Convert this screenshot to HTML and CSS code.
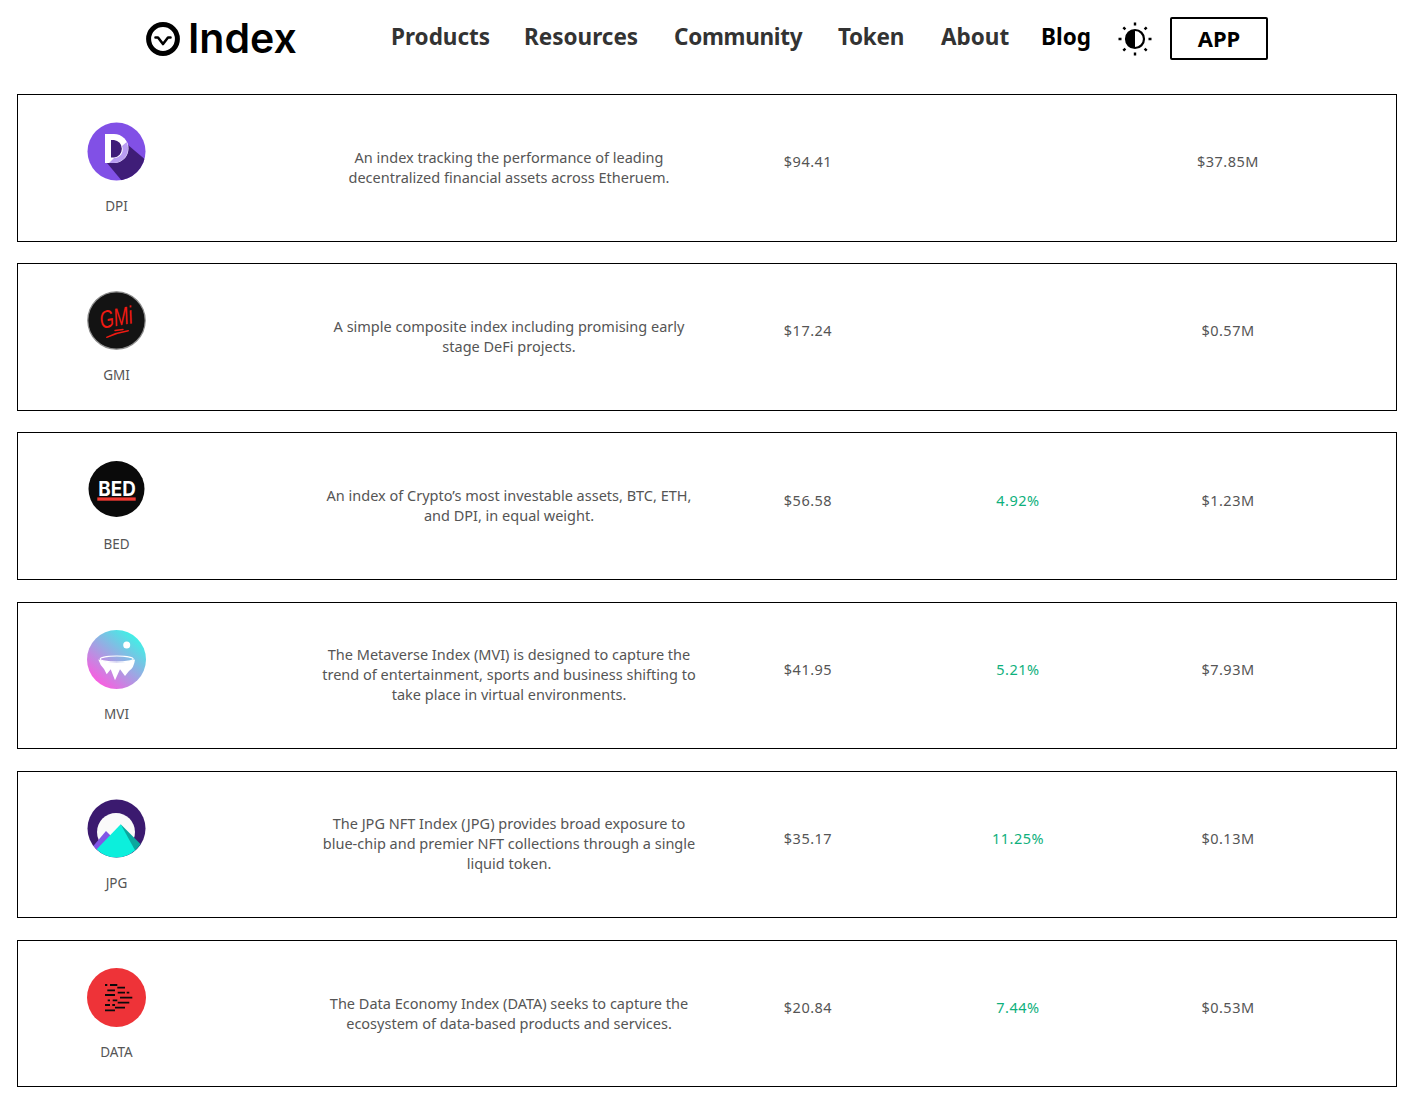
FILE: index.html
```html
<!DOCTYPE html>
<html lang="en">
<head>
    <meta charset="UTF-8" />
    <title>Index Coop - Products</title>
    <link rel="stylesheet" href="styles.css">
</head>
<body>
    <header class="topbar">
        <a class="brand" href="#">
            <svg class="brand-mark" viewBox="0 0 34 34" width="34" height="34">
                <circle cx="17" cy="17" r="14.4" fill="none" stroke="#000" stroke-width="5"/>
                <path d="M9.5 15.5 L12 15.5 L17 22 L22 15.5 L24.5 15.5" fill="none" stroke="#000" stroke-width="2.6" stroke-linejoin="round" stroke-linecap="round"/>
            </svg>
            <span class="brand-name">Index</span>
        </a>
        <nav class="nav">
            <a class="nav-link nav-products" href="#">Products</a>
            <a class="nav-link nav-resources" href="#">Resources</a>
            <a class="nav-link nav-community" href="#">Community</a>
            <a class="nav-link nav-token" href="#">Token</a>
            <a class="nav-link nav-about" href="#">About</a>
            <a class="nav-link nav-blog" href="#">Blog</a>
        </nav>
        <button class="theme-toggle" type="button" aria-label="Toggle theme">
            <svg viewBox="0 0 36 36" width="36" height="36">
                <circle cx="18" cy="18" r="9" fill="none" stroke="#000" stroke-width="2.2"/>
                <path d="M18 9 a9 9 0 0 0 0 18 z" fill="#000"/>
                <path d="M18 1.5v3M18 31.5v3M1.5 18h3M31.5 18h3M6.3 6.3l2.1 2.1M27.6 27.6l2.1 2.1M6.3 29.7l2.1-2.1M27.6 8.4l2.1-2.1" stroke="#000" stroke-width="2.4" fill="none"/>
            </svg>
        </button>
        <a class="app-button" href="#">APP</a>
    </header>

    <main class="products">
        <article class="product">
            <div class="product-id">
                <svg class="token" viewBox="0 0 59 59">
                    <defs><clipPath id="dpi-clip"><circle cx="29.5" cy="29.5" r="29"/></clipPath></defs>
                    <circle cx="29.5" cy="29.5" r="29" fill="#8150e6"/>
                    <g clip-path="url(#dpi-clip)">
                        <path d="M20 41 L35 59 L60 59 L60 39 L41 23 Z" fill="#3f1d78"/>
                    </g>
                    <path d="M18 12 H27 A14.5 14.5 0 0 1 27 41 H18 Z" fill="#fff"/>
                    <path d="M39.6 20 A14.5 14.5 0 0 1 27 41 H22 L27 36 A8.5 8.5 0 0 0 35 24 Z" fill="#b99df2"/>
                    <path d="M24 18 H27 A8.8 8.8 0 0 1 27 35.5 H24 Z" fill="#3f1d78"/>
                </svg>
                <span class="ticker">DPI</span>
            </div>
            <p class="product-desc">An index tracking the performance of leading<br>decentralized financial assets across Etheruem.</p>
            <div class="stat">$94.41</div>
            <div class="stat stat-up"></div>
            <div class="stat">$37.85M</div>
        </article>

        <article class="product">
            <div class="product-id">
                <svg class="token" viewBox="0 0 59 59">
                    <circle cx="29.5" cy="29.5" r="28.7" fill="#131313" stroke="#8d8d8d" stroke-width="1.2"/>
                    <text class="gmi-text" text-anchor="middle" transform="rotate(-10 29 27) translate(29 35) scale(0.72 1)">GMi</text>
                    <path d="M19.7 46.3 Q30 41.5 41.3 39.7 M28 39.5 L36 38.5" stroke="#f01a12" stroke-width="1.4" fill="none" stroke-linecap="round"/>
                </svg>
                <span class="ticker">GMI</span>
            </div>
            <p class="product-desc">A simple composite index including promising early<br>stage DeFi projects.</p>
            <div class="stat">$17.24</div>
            <div class="stat stat-up"></div>
            <div class="stat">$0.57M</div>
        </article>

        <article class="product">
            <div class="product-id">
                <svg class="token" viewBox="0 0 59 59">
                    <circle cx="29.5" cy="29" r="28" fill="#0a0a0a"/>
                    <text class="bed-text" x="11.3" y="35.5" textLength="37.4" lengthAdjust="spacingAndGlyphs">BED</text>
                    <rect x="10.3" y="37.4" width="38.4" height="3.3" fill="#ee3a32"/>
                </svg>
                <span class="ticker">BED</span>
            </div>
            <p class="product-desc">An index of Crypto’s most investable assets, BTC, ETH,<br>and DPI, in equal weight.</p>
            <div class="stat">$56.58</div>
            <div class="stat stat-up">4.92%</div>
            <div class="stat">$1.23M</div>
        </article>

        <article class="product">
            <div class="product-id">
                <svg class="token" viewBox="0 0 59 59">
                    <defs>
                        <linearGradient id="mvi-grad" x1="0.85" y1="0.1" x2="0.2" y2="0.9">
                            <stop offset="0" stop-color="#3cf3e6"/>
                            <stop offset="1" stop-color="#f75fe0"/>
                        </linearGradient>
                    </defs>
                    <circle cx="29.5" cy="29.5" r="29.5" fill="url(#mvi-grad)"/>
                    <circle cx="39.7" cy="15" r="3.5" fill="#fff"/>
                    <ellipse cx="29.7" cy="29" rx="16.5" ry="3" fill="none" stroke="#fff" stroke-width="1.1"/>
                    <path d="M11.3 29.5 Q29.5 36 48 29.5 Q47 38 42 41 L38 46 L33 39.3 L28 50.3 L23.7 39.3 L19.7 44.3 L17 39 Q13 35 11.3 29.5 Z" fill="#fff"/>
                </svg>
                <span class="ticker">MVI</span>
            </div>
            <p class="product-desc">The Metaverse Index (MVI) is designed to capture the<br>trend of entertainment, sports and business shifting to<br>take place in virtual environments.</p>
            <div class="stat">$41.95</div>
            <div class="stat stat-up">5.21%</div>
            <div class="stat">$7.93M</div>
        </article>

        <article class="product">
            <div class="product-id">
                <svg class="token" viewBox="0 0 59 59">
                    <defs><clipPath id="jpg-clip"><circle cx="29.5" cy="29.5" r="29"/></clipPath></defs>
                    <circle cx="29.5" cy="29.5" r="29" fill="#3b1a6f"/>
                    <circle cx="29" cy="33" r="19" fill="#fafafa"/>
                    <g clip-path="url(#jpg-clip)">
                        <path d="M6.3 47 L19 32 L24 37 L11 53 Z" fill="#8256e6"/>
                        <path d="M33.7 25.3 L53.7 45.3 L47 53 L40 45 Z" fill="#0ba79e"/>
                        <path d="M33.7 25.3 L48 51.3 Q40 59 29.5 59 Q17 59 9.7 50.3 Z" fill="#0cefdc"/>
                    </g>
                </svg>
                <span class="ticker">JPG</span>
            </div>
            <p class="product-desc">The JPG NFT Index (JPG) provides broad exposure to<br>blue-chip and premier NFT collections through a single<br>liquid token.</p>
            <div class="stat">$35.17</div>
            <div class="stat stat-up">11.25%</div>
            <div class="stat">$0.13M</div>
        </article>

        <article class="product">
            <div class="product-id">
                <svg class="token" viewBox="0 0 59 59">
                    <circle cx="29.5" cy="29.5" r="29.5" fill="#ee3338"/>
                    <path d="M18 17h2.3M23 17h7.3M30.3 19.7h7.7M20.3 22.3h7.7M30.7 24.7h7.3M39.7 24.7h2.6M18 27h10M33 29.7h12.3M20.7 32.3h2.3M25.7 32.3h4.6M30.7 34.7h11.6M18 37h5M25.3 37h2.7M28 39.7h10M18 42.3h10" stroke="#0a0a0a" stroke-width="1.8" fill="none"/>
                </svg>
                <span class="ticker">DATA</span>
            </div>
            <p class="product-desc">The Data Economy Index (DATA) seeks to capture the<br>ecosystem of data-based products and services.</p>
            <div class="stat">$20.84</div>
            <div class="stat stat-up">7.44%</div>
            <div class="stat">$0.53M</div>
        </article>
    </main>
</body>
</html>
```

FILE: styles.css
```css
html, body {
    margin: 0;
    padding: 0;
    background: #fff;
}

body {
    font-family: "Noto Sans", "Liberation Sans", sans-serif;
    color: #555;
}

a {
    color: inherit;
    text-decoration: none;
}

.topbar {
    display: flex;
    align-items: center;
    height: 77px;
    padding: 0 0 0 146px;
    margin-bottom: 17px;
}

.brand {
    display: flex;
    align-items: center;
    gap: 8px;
    width: 245px;
    color: #000;
}

.brand-name {
    font-family: Inter, "Liberation Sans", sans-serif;
    font-size: 41px;
    font-weight: 600;
    letter-spacing: 0;
    line-height: 1;
}

.nav {
    display: flex;
    align-items: center;
    padding-bottom: 5px;
}

.nav-link {
    font-size: 22.5px;
    font-weight: 700;
    color: #333;
    white-space: nowrap;
}

.nav-products { width: 133px; }
.nav-resources { width: 150px; }
.nav-community { width: 164px; letter-spacing: -0.3px; }
.nav-token { width: 103px; letter-spacing: -0.3px; }
.nav-about { width: 100px; }
.nav-blog { width: 76px; color: #000; }

.theme-toggle {
    display: block;
    width: 36px;
    height: 36px;
    padding: 0;
    border: 0;
    background: none;
}

.app-button {
    display: block;
    box-sizing: border-box;
    width: 98px;
    height: 43px;
    margin-left: 17px;
    border: 2px solid #000;
    border-radius: 2px;
    color: #000;
    font-size: 22px;
    font-weight: 700;
    line-height: 39px;
    text-align: center;
}

.products {
    padding: 0 23px 22px 17px;
}

.product {
    box-sizing: border-box;
    display: grid;
    grid-template-columns: 197px 100px 388px 210px 210px 210px;
    height: 147.5px;
    margin-bottom: 21.68px;
    border: 1px solid #000;
    font-size: 14.5px;
    line-height: 20px;
}

.product:last-child {
    margin-bottom: 0;
}

.product-id {
    display: flex;
    flex-direction: column;
    align-items: center;
    padding-top: 27px;
}

.token {
    display: block;
    width: 59px;
    height: 59px;
}

.ticker {
    margin-top: 15px;
    font-size: 13.5px;
}

.product-desc {
    grid-column: 3;
    align-self: center;
    margin: 0;
    padding-bottom: 2px;
    text-align: center;
}

.stat {
    align-self: center;
    padding-bottom: 13px;
    letter-spacing: 0.5px;
    text-align: center;
}

.stat-up {
    color: #0eb07c;
}

.gmi-text {
    font-family: "Liberation Sans", sans-serif;
    font-size: 25px;
    font-style: italic;
    fill: #f01a12;
}

.bed-text {
    font-family: Inter, sans-serif;
    font-size: 20px;
    font-weight: 700;
    fill: #fff;
}
```
